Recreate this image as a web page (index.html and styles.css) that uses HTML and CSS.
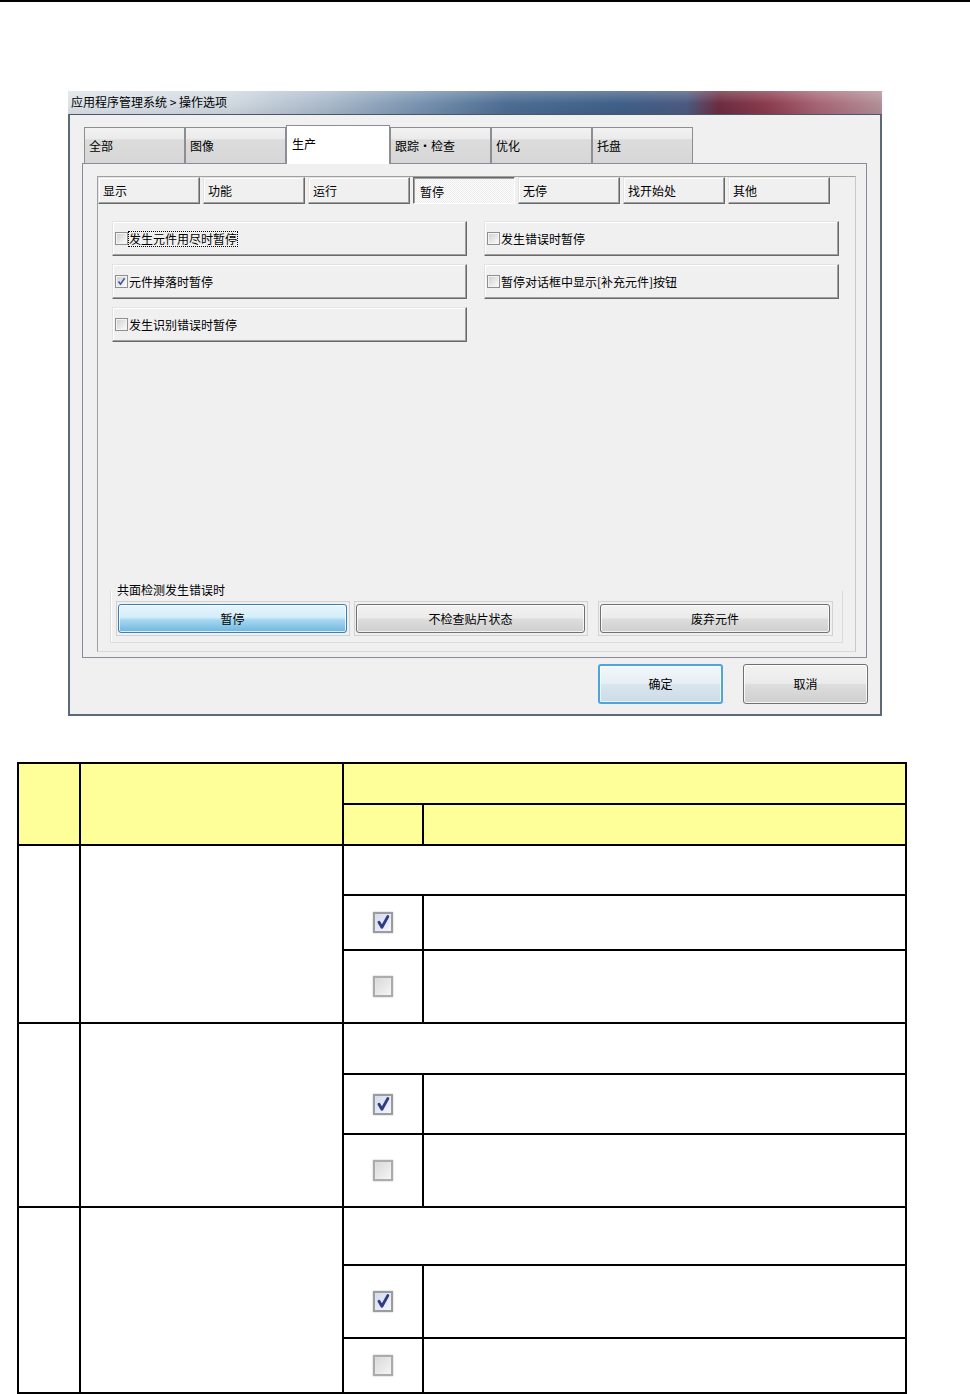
FILE: index.html
```html
<!DOCTYPE html>
<html lang="zh-CN">
<head>
<meta charset="utf-8">
<title>操作选项</title>
<link rel="stylesheet" href="styles.css">
</head>
<body>
<div class="topline"></div>
<div class="window">
  <div class="titlebar">应用程序管理系统 &gt; 操作选项</div>
  <div class="wbody">
    <div class="tabs1">
      <div class="tab1">全部</div>
      <div class="tab1">图像</div>
      <div class="tab1 sel">生产</div>
      <div class="tab1">跟踪・检查</div>
      <div class="tab1">优化</div>
      <div class="tab1">托盘</div>
    </div>
    <div class="panel">
      <div class="inner">
        <div class="tabs2">
          <div class="tab2">显示</div>
          <div class="tab2">功能</div>
          <div class="tab2">运行</div>
          <div class="tab2 sel">暂停</div>
          <div class="tab2">无停</div>
          <div class="tab2">找开始处</div>
          <div class="tab2">其他</div>
        </div>
        <div class="opts">
          <div class="col">
            <div class="opt"><span class="cb"></span><span class="focus">发生元件用尽时暂停</span></div>
            <div class="opt"><span class="cb"><svg class="ck" width="9" height="9" viewBox="0 0 9 9"><path d="M1.5 4.5 L3.5 7.2 L7.6 1.2" fill="none" stroke="#3c5aa0" stroke-width="1.6"/></svg></span><span>元件掉落时暂停</span></div>
            <div class="opt"><span class="cb"></span><span>发生识别错误时暂停</span></div>
          </div>
          <div class="col">
            <div class="opt"><span class="cb"></span><span>发生错误时暂停</span></div>
            <div class="opt"><span class="cb"></span><span>暂停对话框中显示[补充元件]按钮</span></div>
          </div>
        </div>
        <fieldset class="group">
          <legend>共面检测发生错误时</legend>
          <div class="gbtns">
            <div class="bframe f1"><div class="wbtn blue">暂停</div></div>
            <div class="bframe f2"><div class="wbtn">不检查贴片状态</div></div>
            <div class="bframe f3"><div class="wbtn">废弃元件</div></div>
          </div>
        </fieldset>
      </div>
    </div>
    <div class="actions">
      <div class="dbtn ok">确定</div>
      <div class="dbtn">取消</div>
    </div>
  </div>
</div>

<div class="grid">
  <div class="h rs2"></div>
  <div class="h rs2"></div>
  <div class="h cs2"></div>
  <div class="h"></div>
  <div class="h"></div>

  <div class="rs3"></div>
  <div class="rs3"></div>
  <div class="cs2"></div>
  <div><span class="tcb"><svg width="16" height="17" viewBox="0 0 16 17"><path d="M4 8.2 L6.9 13.2 L12.8 2.6" fill="none" stroke="#2f3c84" stroke-width="2.9" stroke-linecap="round" stroke-linejoin="round"/></svg></span></div>
  <div></div>
  <div><span class="tcb off"></span></div>
  <div></div>

  <div class="rs3"></div>
  <div class="rs3"></div>
  <div class="cs2"></div>
  <div><span class="tcb"><svg width="16" height="17" viewBox="0 0 16 17"><path d="M4 8.2 L6.9 13.2 L12.8 2.6" fill="none" stroke="#2f3c84" stroke-width="2.9" stroke-linecap="round" stroke-linejoin="round"/></svg></span></div>
  <div></div>
  <div><span class="tcb off"></span></div>
  <div></div>

  <div class="rs3"></div>
  <div class="rs3"></div>
  <div class="cs2"></div>
  <div><span class="tcb"><svg width="16" height="17" viewBox="0 0 16 17"><path d="M4 8.2 L6.9 13.2 L12.8 2.6" fill="none" stroke="#2f3c84" stroke-width="2.9" stroke-linecap="round" stroke-linejoin="round"/></svg></span></div>
  <div></div>
  <div><span class="tcb off"></span></div>
  <div></div>
</div>
</body>
</html>
```

FILE: styles.css
```css
html, body {
  margin: 0;
  padding: 0;
}
body {
  width: 970px;
  height: 1394px;
  overflow: hidden;
  background: #fff;
  color: #000;
  font-family: "Noto Sans CJK SC", "Noto Sans", "DejaVu Sans", sans-serif;
  font-size: 12px;
  line-height: 14px;
}

.topline {
  height: 2px;
  background: #000;
}

/* ---------- dialog window ---------- */
.window {
  margin: 89px 0 0 68px;
  width: 814px;
  height: 625px;
  display: flex;
  flex-direction: column;
}
.titlebar {
  flex: none;
  height: 23px;
  line-height: 22px;
  padding-left: 3px;
  background:
    linear-gradient(rgba(255,255,255,.22), rgba(255,255,255,0) 55%, rgba(0,0,0,.06)),
    linear-gradient(90deg, #dde3e9 0%, #d0d8e0 20%, #a9b9ca 32%, #7590ae 44%, #4d6d93 54%, #3f6088 68%, #4c5a80 76%, #6e2c40 80%, #8b3d4f 86%, #a76474 92%, #b39098 100%);
}
.wbody {
  flex: 1;
  background: #f0f0f0;
  border: 2px solid #5d6976;
  border-top: 1px solid #48586a;
  display: flex;
  flex-direction: column;
}

/* outer tabs */
.tabs1 {
  display: flex;
  align-items: flex-end;
  height: 38px;
  margin-top: 10px;
  padding-left: 14px;
  position: relative;
  z-index: 1;
}
.tab1 {
  box-sizing: border-box;
  width: 101px;
  height: 36px;
  padding-left: 4px;
  display: flex;
  align-items: center;
  border: 1px solid #8c8e94;
  border-bottom: none;
  background: linear-gradient(#f2f2f2 0%, #ebebeb 30%, #dcdcdc 34%, #d6d6d6 100%);
}
.tab1.sel {
  width: 104px;
  height: 39px;
  margin-bottom: -1px;
  padding-left: 5px;
  padding-bottom: 3px;
  background: #fff;
}

.panel {
  box-sizing: border-box;
  margin-left: 12px;
  width: 785px;
  height: 495px;
  border: 1px solid #898c95;
  background: #f0f0f0;
  padding: 12px 10px 5px 14px;
  display: flex;
}
.inner {
  flex: 1;
  border: 1px solid;
  border-color: #a0a0a0 #c8c8c8 #d8d8d8 #a0a0a0;
  display: flex;
  flex-direction: column;
}

/* inner button-tabs */
.tabs2 {
  display: flex;
  gap: 3px;
  height: 27px;
}
.tab2 {
  box-sizing: border-box;
  width: 102px;
  padding-left: 4px;
  display: flex;
  align-items: center;
  border: 1px solid;
  border-color: #e3e3e3 #696969 #696969 #e3e3e3;
  box-shadow: inset -1px -1px #a0a0a0, inset 1px 1px #fff;
  background: #f0f0f0;
}
.tab2.sel {
  border-color: #696969 #fff #fff #696969;
  box-shadow: inset 1px 1px #a0a0a0;
  background: repeating-conic-gradient(#ffffff 0 25%, #ebebeb 0 50%) 0 0 / 2px 2px;
  padding-left: 6px;
  padding-top: 2px;
}

/* option rows */
.opts {
  display: flex;
  gap: 17px;
  margin: 17px 0 0 14px;
}
.col {
  width: 355px;
  display: flex;
  flex-direction: column;
  gap: 8px;
}
.opt {
  box-sizing: border-box;
  height: 35px;
  padding-left: 2px;
  display: flex;
  align-items: center;
  gap: 1px;
  border: 1px solid;
  border-color: #e3e3e3 #696969 #696969 #e3e3e3;
  box-shadow: inset -1px -1px #a0a0a0, inset 1px 1px #fff;
  background: #f0f0f0;
}
.cb {
  box-sizing: border-box;
  flex: none;
  width: 13px;
  height: 13px;
  border: 1px solid #8e8f8f;
  padding: 1px;
  display: flex;
  align-items: center;
  justify-content: center;
  background: linear-gradient(135deg, #d2d2d2, #f9f9f9) content-box, #f4f4f4;
}
.ck {
  display: block;
}
.focus {
  outline: 1px dotted #000;
  outline-offset: 0;
}

/* group box */
.group {
  margin: auto 12px 8px 12px;
  padding: 0 6px 6px 5px;
  border: 1px solid #dcdcdc;
  border-top-color: transparent;
  box-shadow: inset 1px 0 #fff;
  min-width: 0;
}
.group legend {
  padding: 0 1px;
  line-height: 14px;
}
.gbtns {
  display: flex;
  margin-top: 4px;
}
.bframe {
  box-sizing: border-box;
  width: 234px;
  height: 35px;
  border: 1px solid #d2d2d2;
  padding: 2px 2px 2px 1px;
  display: flex;
}
.f1 { margin-right: 4px; }
.f2 { margin-right: 10px; }
.f3 { width: 235px; }
.wbtn {
  flex: 1;
  display: flex;
  align-items: center;
  justify-content: center;
  border: 1px solid #707070;
  border-radius: 3px;
  box-shadow: inset 0 0 0 1px rgba(255,255,255,.75);
  background: linear-gradient(#f2f2f2 0%, #ebebeb 48%, #dddddd 52%, #cfcfcf 100%);
}
.wbtn.blue {
  border-color: #3c7fb1;
  background: linear-gradient(#e6f5fc 0%, #d4eefb 45%, #a8d8f2 55%, #6db6de 100%);
}

/* dialog buttons */
.actions {
  display: flex;
  justify-content: flex-end;
  gap: 20px;
  margin-top: 6px;
  padding-right: 12px;
}
.dbtn {
  box-sizing: border-box;
  width: 125px;
  height: 40px;
  display: flex;
  align-items: center;
  justify-content: center;
  border: 1px solid #707070;
  border-radius: 3px;
  box-shadow: inset 0 0 0 1px rgba(255,255,255,.8);
  background: linear-gradient(#f2f2f2 0%, #ebebeb 48%, #dddddd 52%, #cfcfcf 100%);
}
.dbtn.ok {
  border: 2px solid #4ea4dc;
  box-shadow: inset 0 0 0 1px rgba(255,255,255,.7);
  background: linear-gradient(#f1f6f9 0%, #e7eff4 48%, #d8e5ed 52%, #ccdce6 100%);
}

/* ---------- table ---------- */
.grid {
  display: grid;
  grid-template-columns: 60px 261px 78px 481px;
  grid-template-rows: 39px 39px 48px 53px 71px 49px 58px 71px 56px 71px 53px;
  gap: 2px;
  padding: 2px;
  background: #000;
  width: max-content;
  margin: 46px 0 0 17px;
}
.grid > div {
  background: #fff;
  display: flex;
  align-items: center;
  justify-content: center;
}
.grid > div.h {
  background: #ffff99;
}
.rs2 { grid-row: span 2; }
.rs3 { grid-row: span 3; }
.cs2 { grid-column: span 2; }

.tcb {
  box-sizing: border-box;
  width: 20px;
  height: 21px;
  border: 2px solid #9c9c9c;
  display: flex;
  align-items: center;
  justify-content: center;
  background: linear-gradient(135deg, #d3daee, #f3f5fb);
  box-shadow: 0 0 1.5px rgba(0,0,0,.3), inset 0 0 1px #fff;
}
.tcb.off {
  border-color: #ababab;
  background: linear-gradient(135deg, #d8d8d8, #f5f5f5);
}
```
